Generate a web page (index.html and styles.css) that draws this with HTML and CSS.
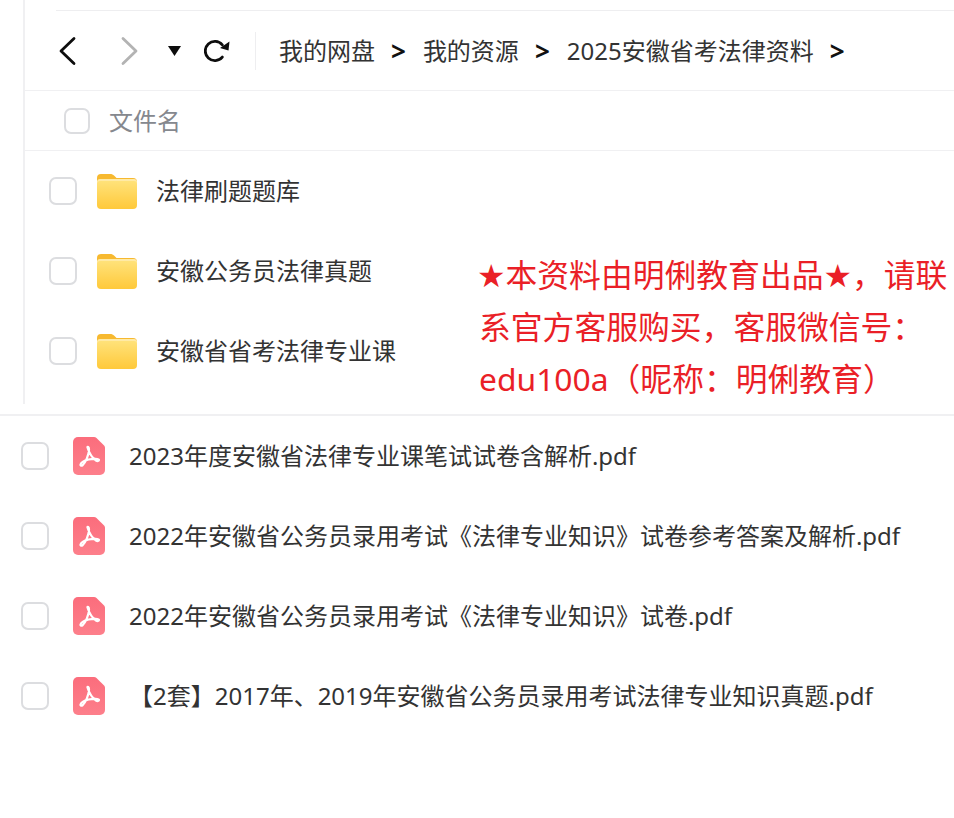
FILE: index.html
```html
<!DOCTYPE html>
<html lang="zh-CN">
<head>
<meta charset="utf-8">
<title>我的网盘</title>
<link rel="stylesheet" href="styles.css">
</head>
<body>
<svg class="defs" width="0" height="0" aria-hidden="true">
  <defs>
    <linearGradient id="fg" x1="0" y1="0" x2="0" y2="1">
      <stop offset="0" stop-color="#ffe27a"/>
      <stop offset="1" stop-color="#ffc93a"/>
    </linearGradient>
    <linearGradient id="pg" x1="0" y1="0" x2="0" y2="1">
      <stop offset="0" stop-color="#fb6d7c"/>
      <stop offset="1" stop-color="#fd7f8b"/>
    </linearGradient>
    <symbol id="folder" viewBox="0 0 40 36">
      <path d="M0 5a4 4 0 0 1 4-4h9c2 0 3 .6 4.300 1.800L19.500 5H36a4 4 0 0 1 4 4v10H0z" fill="#f7b92f"/>
      <path d="M0 9a3 3 0 0 1 3-3h34a3 3 0 0 1 3 3v4H0z" fill="#ffeaa6"/>
      <path d="M0 11a3 3 0 0 1 3-3h34a3 3 0 0 1 3 3v21a4 4 0 0 1-4 4H4a4 4 0 0 1-4-4z" fill="url(#fg)"/>
    </symbol>
    <symbol id="pdf" viewBox="0 0 32 38">
      <path d="M5 0h16c1 0 1.800.4 2.500 1l7.300 7.200c.8.800 1.200 1.600 1.200 2.800v22a5 5 0 0 1-5 5H5a5 5 0 0 1-5-5V5a5 5 0 0 1 5-5z" fill="url(#pg)"/>
      <path d="M14.500 10.500c1.500 5 3 9 8.500 13 1.500 1 3 .5 3-.5 0-1.500-6-1.500-10.500-.5-4 1-7.500 3-8 5-.3 1.300 1 1.600 2 .8 3-2.500 6.500-10.500 6.500-16 0-2.300-2-3.300-1.500-1.800z" fill="none" stroke="#fff" stroke-width="2.200" stroke-linejoin="round"/>
    </symbol>
  </defs>
</svg>
<div class="page">
  <section class="panel">
    <div class="top-rule"></div>
    <nav class="toolbar">
      <svg class="ico-back" width="22" height="30" viewBox="0 0 22 30"><path d="M18 2.500 5 15l13 12.500" fill="none" stroke="#0d0d0d" stroke-width="2.800" stroke-linecap="round" stroke-linejoin="round"/></svg>
      <svg class="ico-fwd" width="22" height="30" viewBox="0 0 22 30"><path d="M4 2.500 17 15 4 27.500" fill="none" stroke="#b3b3b3" stroke-width="2.800" stroke-linecap="round" stroke-linejoin="round"/></svg>
      <svg class="ico-drop" width="13" height="10" viewBox="0 0 13 10"><path d="M0 0h13L6.500 10z" fill="#0d0d0d"/></svg>
      <svg class="ico-refresh" width="26" height="26" viewBox="0 0 26 26"><path d="M18.300 6.900A9.600 9.600 0 1 0 18.300 19.100" fill="none" stroke="#0d0d0d" stroke-width="2.800" stroke-linecap="round"/><path d="M25.500 3.500 24.500 12.500 16 10z" fill="#0d0d0d"/></svg>
      <span class="sep"></span>
      <ol class="crumbs">
        <li>我的网盘</li>
        <li>我的资源</li>
        <li>2025安徽省考法律资料</li>
      </ol>
    </nav>
    <div class="list-head">
      <span class="check check-head"></span>
      <span class="head-label">文件名</span>
    </div>
    <ul class="folder-list">
      <li class="row"><span class="check"></span><svg class="folder-icon"><use href="#folder"/></svg><span class="name">法律刷题题库</span></li>
      <li class="row"><span class="check"></span><svg class="folder-icon"><use href="#folder"/></svg><span class="name">安徽公务员法律真题</span></li>
      <li class="row"><span class="check"></span><svg class="folder-icon"><use href="#folder"/></svg><span class="name">安徽省省考法律专业课</span></li>
    </ul>
    <p class="notice">★本资料由明俐教育出品★，请联系官方客服购买，客服微信号：edu100a（昵称：明俐教育）</p>
  </section>
  <ul class="file-list">
    <li class="row"><span class="check"></span><svg class="pdf-icon"><use href="#pdf"/></svg><span class="name">2023年度安徽省法律专业课笔试试卷含解析.pdf</span></li>
    <li class="row"><span class="check"></span><svg class="pdf-icon"><use href="#pdf"/></svg><span class="name">2022年安徽省公务员录用考试《法律专业知识》试卷参考答案及解析.pdf</span></li>
    <li class="row"><span class="check"></span><svg class="pdf-icon"><use href="#pdf"/></svg><span class="name">2022年安徽省公务员录用考试《法律专业知识》试卷.pdf</span></li>
    <li class="row"><span class="check"></span><svg class="pdf-icon"><use href="#pdf"/></svg><span class="name">【2套】2017年、2019年安徽省公务员录用考试法律专业知识真题.pdf</span></li>
  </ul>
</div>
</body>
</html>
```
FILE: styles.css
```css
* { box-sizing: border-box; }
html, body { margin: 0; padding: 0; background: #fff; }
body {
  font-family: "Noto Sans", "Noto Sans CJK SC", sans-serif;
  color: #333;
  width: 954px;
  height: 818px;
  overflow: hidden;
}
.defs { position: absolute; }
ul, ol { list-style: none; margin: 0; padding: 0; }
.page { display: flex; flex-direction: column; }

.panel {
  position: relative;
  height: 416px;
  padding-left: 24px;
  padding-top: 10px;
  padding-bottom: 12px;
  border-bottom: 2px solid #f0f0f2;
  display: flex;
  flex-direction: column;
}
.panel::before {
  content: "";
  position: absolute;
  left: 23px;
  top: 0;
  bottom: 10px;
  width: 2px;
  background: #f0f0f2;
}
.top-rule { height: 1px; margin-left: 32px; background: #eeeef0; }

.toolbar {
  height: 80px;
  display: flex;
  align-items: center;
  border-bottom: 1px solid #f0f0f2;
  padding-left: 32px;
}
.ico-back { flex: none; }
.ico-fwd { margin-left: 41px; flex: none; }
.ico-drop { margin-left: 27px; flex: none; }
.ico-refresh { margin-left: 23px; flex: none; }
.sep { width: 1px; height: 38px; background: #eeeef0; margin-left: 25px; flex: none; }

.crumbs { display: flex; margin-left: 23px; font-size: 24px; line-height: 34px; color: #333; }
.crumbs li { display: flex; align-items: center; }
.crumbs li::after {
  content: ">";
  font-size: 26px;
  font-weight: 700;
  color: #111;
  margin: 0 17px 0 16px;
}

.list-head {
  height: 60px;
  display: flex;
  align-items: center;
  border-bottom: 1px solid #f0f0f2;
  padding-left: 40px;
}
.head-label { font-size: 24px; line-height: 34px; color: #85888e; margin-left: 19px; }

.check {
  flex: none;
  width: 28px;
  height: 28px;
  border: 2px solid #dcdde0;
  border-radius: 7px;
  background: #fff;
}
.check-head { width: 26px; height: 26px; }

.row {
  height: 80px;
  display: flex;
  align-items: center;
  font-size: 24px;
  line-height: 34px;
}
.name { white-space: nowrap; }

.folder-list { padding-left: 25px; }
.folder-icon { width: 40px; height: 36px; margin-left: 20px; flex: none; }
.folder-list .name { margin-left: 19px; }

.notice {
  position: absolute;
  left: 479px;
  top: 249px;
  width: 475px;
  margin: 0;
  font-family: "Noto Sans", "DejaVu Sans", "Noto Sans CJK SC", sans-serif;
  font-size: 31.800px;
  line-height: 52px;
  text-indent: -2px;
  color: #ea1f27;
}

.file-list { padding-left: 21px; }
.pdf-icon { width: 32px; height: 38px; margin-left: 24px; flex: none; }
.file-list .name { margin-left: 24px; }
```
